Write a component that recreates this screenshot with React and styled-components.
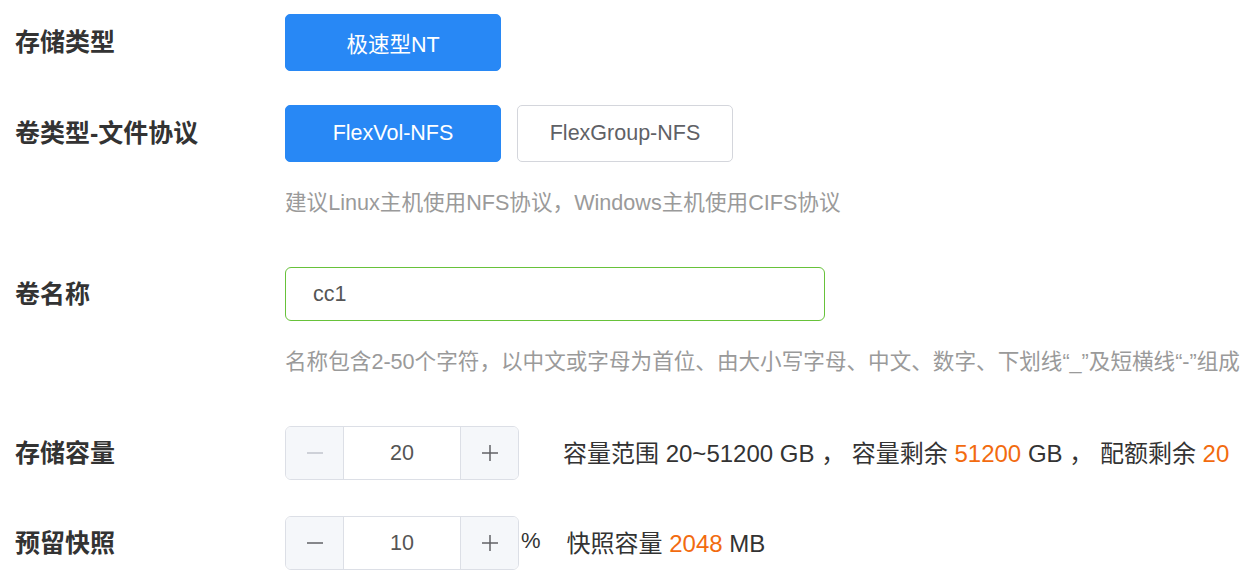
import React from "react";
import styled, { createGlobalStyle } from "styled-components";

const Global = createGlobalStyle`
  html, body { margin: 0; padding: 0; background: #fff; overflow: hidden; }
  body { font-family: "Liberation Sans", "Noto Sans CJK SC", sans-serif; color: #333; }
  * { box-sizing: border-box; }
`;

const Form = styled.div`
  padding: 14px 0 0 15px;
  width: 1260px;
`;

const Item = styled.div`
  display: grid;
  grid-template-columns: 270px 1fr;
  align-items: start;
  margin-bottom: ${(p) => p.$mb || 0}px;
`;

const Label = styled.div`
  font-size: 25px;
  font-weight: 700;
  color: #333;
  height: ${(p) => p.$h || 54}px;
  line-height: ${(p) => p.$h || 54}px;
  white-space: nowrap;
`;

const Content = styled.div`
  display: flex;
  flex-direction: column;
`;

const Row = styled.div`
  display: flex;
  align-items: center;
  gap: ${(p) => p.$gap || 0}px;
  white-space: nowrap;
`;

const Choice = styled.button`
  width: 216px;
  height: 57px;
  border-radius: 5px;
  font-family: inherit;
  font-size: 21.5px;
  cursor: pointer;
  border: 1px solid ${(p) => (p.$active ? "#2888f5" : "#d4d6dc")};
  background: ${(p) => (p.$active ? "#2888f5" : "#fff")};
  color: ${(p) => (p.$active ? "#fff" : "#5f6166")};
  padding: 0;
`;

const Hint = styled.div`
  margin-top: 25px;
  font-size: 21.6px;
  line-height: 32px;
  color: #9a9a9a;
  white-space: nowrap;
`;

const TextInput = styled.div`
  width: 540px;
  height: 54px;
  border: 1px solid #67c23a;
  border-radius: 6px;
  padding-left: 27px;
  display: flex;
  align-items: center;
  font-size: 21.5px;
  color: #555;
`;

const Stepper = styled.div`
  width: 234px;
  height: 54px;
  border: 1px solid #dcdfe6;
  border-radius: 6px;
  display: grid;
  grid-template-columns: 58px 1fr 58px;
  overflow: hidden;
  flex-shrink: 0;
`;

const StepBtn = styled.div`
  background: #f5f7fa;
  display: flex;
  align-items: center;
  justify-content: center;
  color: ${(p) => (p.$disabled ? "#c0c4cc" : "#606266")};
  border-left: ${(p) => (p.$side === "right" ? "1px solid #dcdfe6" : "none")};
  border-right: ${(p) => (p.$side === "left" ? "1px solid #dcdfe6" : "none")};
`;

const StepValue = styled.div`
  display: flex;
  align-items: center;
  justify-content: center;
  font-size: 21.5px;
  color: #555;
  background: #fff;
`;

const Info = styled.span`
  font-size: 24px;
  color: #333;
  margin-left: ${(p) => p.$ml || 0}px;
  position: relative;
  top: -2px;
`;

const Unit = styled.span`
  font-size: 22px;
  color: #333;
  margin-left: 2px;
  position: relative;
  top: -2px;
`;

const Num = styled.span`
  color: #f26b0f;
`;

const Minus = () => (
  <svg width="18" height="18" viewBox="0 0 18 18">
    <line x1="1" y1="9" x2="17" y2="9" stroke="currentColor" strokeWidth="1.5" />
  </svg>
);

const Plus = () => (
  <svg width="18" height="18" viewBox="0 0 18 18">
    <line x1="1" y1="9" x2="17" y2="9" stroke="currentColor" strokeWidth="1.5" />
    <line x1="9" y1="1" x2="9" y2="17" stroke="currentColor" strokeWidth="1.5" />
  </svg>
);

const NumberInput = ({ value, min }) => (
  <Stepper>
    <StepBtn $side="left" $disabled={min}>
      <Minus />
    </StepBtn>
    <StepValue>{value}</StepValue>
    <StepBtn $side="right">
      <Plus />
    </StepBtn>
  </Stepper>
);

export default function App() {
  return (
    <>
      <Global />
      <Form>
        <Item $mb={34}>
          <Label $h={57}>存储类型</Label>
          <Content>
            <Row>
              <Choice $active>极速型NT</Choice>
            </Row>
          </Content>
        </Item>
        <Item $mb={48}>
          <Label $h={57}>卷类型-文件协议</Label>
          <Content>
            <Row $gap={16}>
              <Choice $active>FlexVol-NFS</Choice>
              <Choice>FlexGroup-NFS</Choice>
            </Row>
            <Hint>建议Linux主机使用NFS协议，Windows主机使用CIFS协议</Hint>
          </Content>
        </Item>
        <Item $mb={48}>
          <Label>卷名称</Label>
          <Content>
            <TextInput>cc1</TextInput>
            <Hint>名称包含2-50个字符，以中文或字母为首位、由大小写字母、中文、数字、下划线“_”及短横线“-”组成</Hint>
          </Content>
        </Item>
        <Item $mb={36}>
          <Label>存储容量</Label>
          <Content>
            <Row>
              <NumberInput value="20" min />
              <Info $ml={44}>
                容量范围 20~51200 GB ， 容量剩余 <Num>51200</Num> GB ， 配额剩余 <Num>20</Num>
              </Info>
            </Row>
          </Content>
        </Item>
        <Item>
          <Label>预留快照</Label>
          <Content>
            <Row>
              <NumberInput value="10" />
              <Unit>%</Unit>
              <Info $ml={26}>
                快照容量 <Num>2048</Num> MB
              </Info>
            </Row>
          </Content>
        </Item>
      </Form>
    </>
  );
}
